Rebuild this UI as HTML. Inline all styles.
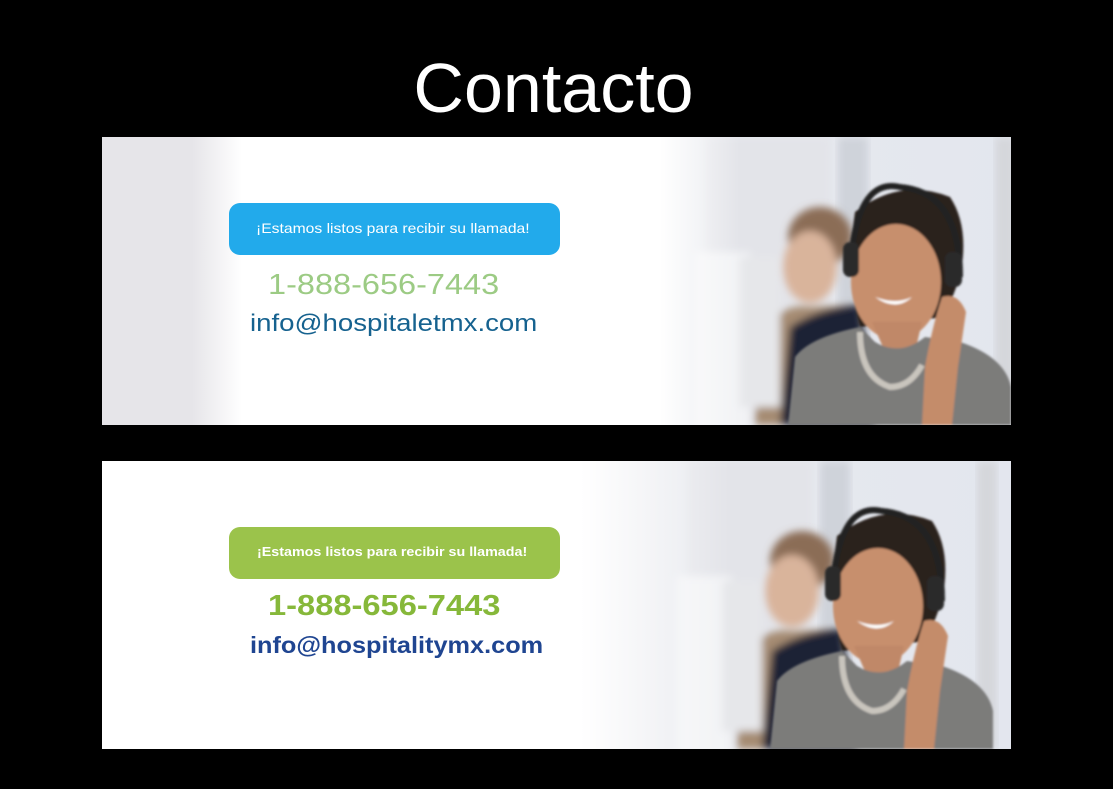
<!DOCTYPE html>
<html><head><meta charset="utf-8"><style>
*{margin:0;padding:0;box-sizing:border-box}
body{width:1113px;height:789px;background:#000;position:relative;overflow:hidden;font-family:"Liberation Sans",sans-serif}
h1{position:absolute;left:-3px;width:1113px;top:48px;text-align:center;color:#fff;font-weight:400;font-size:70px;line-height:80px}
.ban{position:absolute;left:102px;width:909px;height:288px;background:#fff;overflow:hidden}
.pill{position:absolute;left:127px;width:331px;height:52px;border-radius:11px}
.t{position:absolute;white-space:nowrap;transform-origin:0 50%}
svg.s{position:absolute;top:0}
</style></head><body>
<h1>Contacto</h1>
<svg width="0" height="0" style="position:absolute"><defs>
<linearGradient id="bg" x1="0" x2="1"><stop offset="0" stop-color="#e9eaee"/><stop offset="1" stop-color="#e2e6ee"/></linearGradient>
<filter id="b4"><feGaussianBlur stdDeviation="4"/></filter>
<filter id="b1"><feGaussianBlur stdDeviation="1"/></filter>
<g id="scene">
<rect x="-100" y="0" width="520" height="288" fill="url(#bg)"/>
<rect x="45" y="0" width="125" height="288" fill="#e3e4e9" filter="url(#b4)"/>
<rect x="178" y="0" width="30" height="288" fill="#cfd3da" filter="url(#b4)"/>
<rect x="335" y="0" width="20" height="288" fill="#d5d7db" filter="url(#b4)"/>
<g filter="url(#b4)">
<ellipse cx="160" cy="100" rx="32" ry="30" fill="#8b6d57"/>
<ellipse cx="150" cy="130" rx="27" ry="36" fill="#d9b49b"/>
<path d="M95 288 L100 200 Q120 165 150 170 L200 168 L215 288Z" fill="#a58b72"/>
<path d="M120 288 L130 190 Q160 170 200 168 L215 288Z" fill="#1d2334"/>
<rect x="35" y="115" width="55" height="180" fill="#f2f3f5"/>
<rect x="80" y="120" width="40" height="150" fill="#e6e7ea"/>
</g>
<g filter="url(#b1)">
<path d="M195 75 Q240 40 290 60 Q310 90 300 140 L285 180 L200 190 Q185 140 195 75Z" fill="#2b231f"/>
<ellipse cx="236" cy="145" rx="45" ry="58" fill="#c78f6d"/>
<path d="M190 135 Q195 40 240 50 Q300 55 300 140" fill="none" stroke="#222" stroke-width="6"/>
<rect x="183" y="105" width="16" height="35" rx="7" fill="#2a2a2a"/>
<rect x="285" y="115" width="17" height="35" rx="7" fill="#2a2a2a"/>
<path d="M212 185 L225 215 L255 215 L262 185Z" fill="#c08867"/>
<path d="M128 288 L135 220 Q150 200 200 190 L215 205 Q240 220 265 200 L300 205 Q345 220 351 250 L351 288Z" fill="#7c7b7a"/>
<path d="M200 195 Q200 240 230 250 Q250 250 262 228" fill="none" stroke="#c9c5bd" stroke-width="6"/>
<path d="M262 288 L265 230 Q272 190 282 160 Q298 155 306 175 L298 230 L292 288Z" fill="#c48c6a"/>
<path d="M215 160 Q236 175 252 160 Q236 168 215 160Z" fill="#fff"/>
</g>
</g>
<linearGradient id="fadeL" x1="0" x2="1"><stop offset="0" stop-color="#fff"/><stop offset="1" stop-color="#fff" stop-opacity="0"/></linearGradient>
</defs></svg>

<div class="ban" style="top:137px;background:linear-gradient(90deg,#e6e5e9 0,#e6e5e9 90px,#fff 140px,#fff 100%)">
<svg class="s" style="left:558px" width="351" height="288" viewBox="0 0 351 288"><use href="#scene"/><rect x="0" y="0" width="80" height="288" fill="url(#fadeL)"/></svg>
<div class="pill" style="top:66px;background:#22aaeb"></div>
<div class="t" style="left:154px;top:82px;color:#fff;font-size:14px;line-height:18px;transform:scaleX(1.12)">¡Estamos listos para recibir su llamada!</div>
<div class="t" style="left:166px;top:132px;color:#9ccb84;font-size:29px;line-height:32px;transform:scaleX(1.12)">1-888-656-7443</div>
<div class="t" style="left:148px;top:173px;color:#16628f;font-size:24px;line-height:28px;transform:scaleX(1.15)">info@hospitaletmx.com</div>
</div>

<div class="ban" style="top:461px">
<svg class="s" style="left:478px" width="431" height="288" viewBox="-62 0 431 288"><use href="#scene"/><rect x="-62" y="0" width="150" height="288" fill="url(#fadeL)"/></svg>
<div class="pill" style="top:66px;background:#9bc34b"></div>
<div class="t" style="left:155px;top:83px;color:#fff;font-weight:700;font-size:13px;line-height:16px;transform:scaleX(1.1)">¡Estamos listos para recibir su llamada!</div>
<div class="t" style="left:166px;top:129px;color:#86b83a;font-weight:700;font-size:29px;line-height:32px;transform:scaleX(1.126)">1-888-656-7443</div>
<div class="t" style="left:148px;top:170px;color:#1f4591;font-weight:700;font-size:23px;line-height:28px;transform:scaleX(1.1)">info@hospitalitymx.com</div>
</div>
</body></html>
